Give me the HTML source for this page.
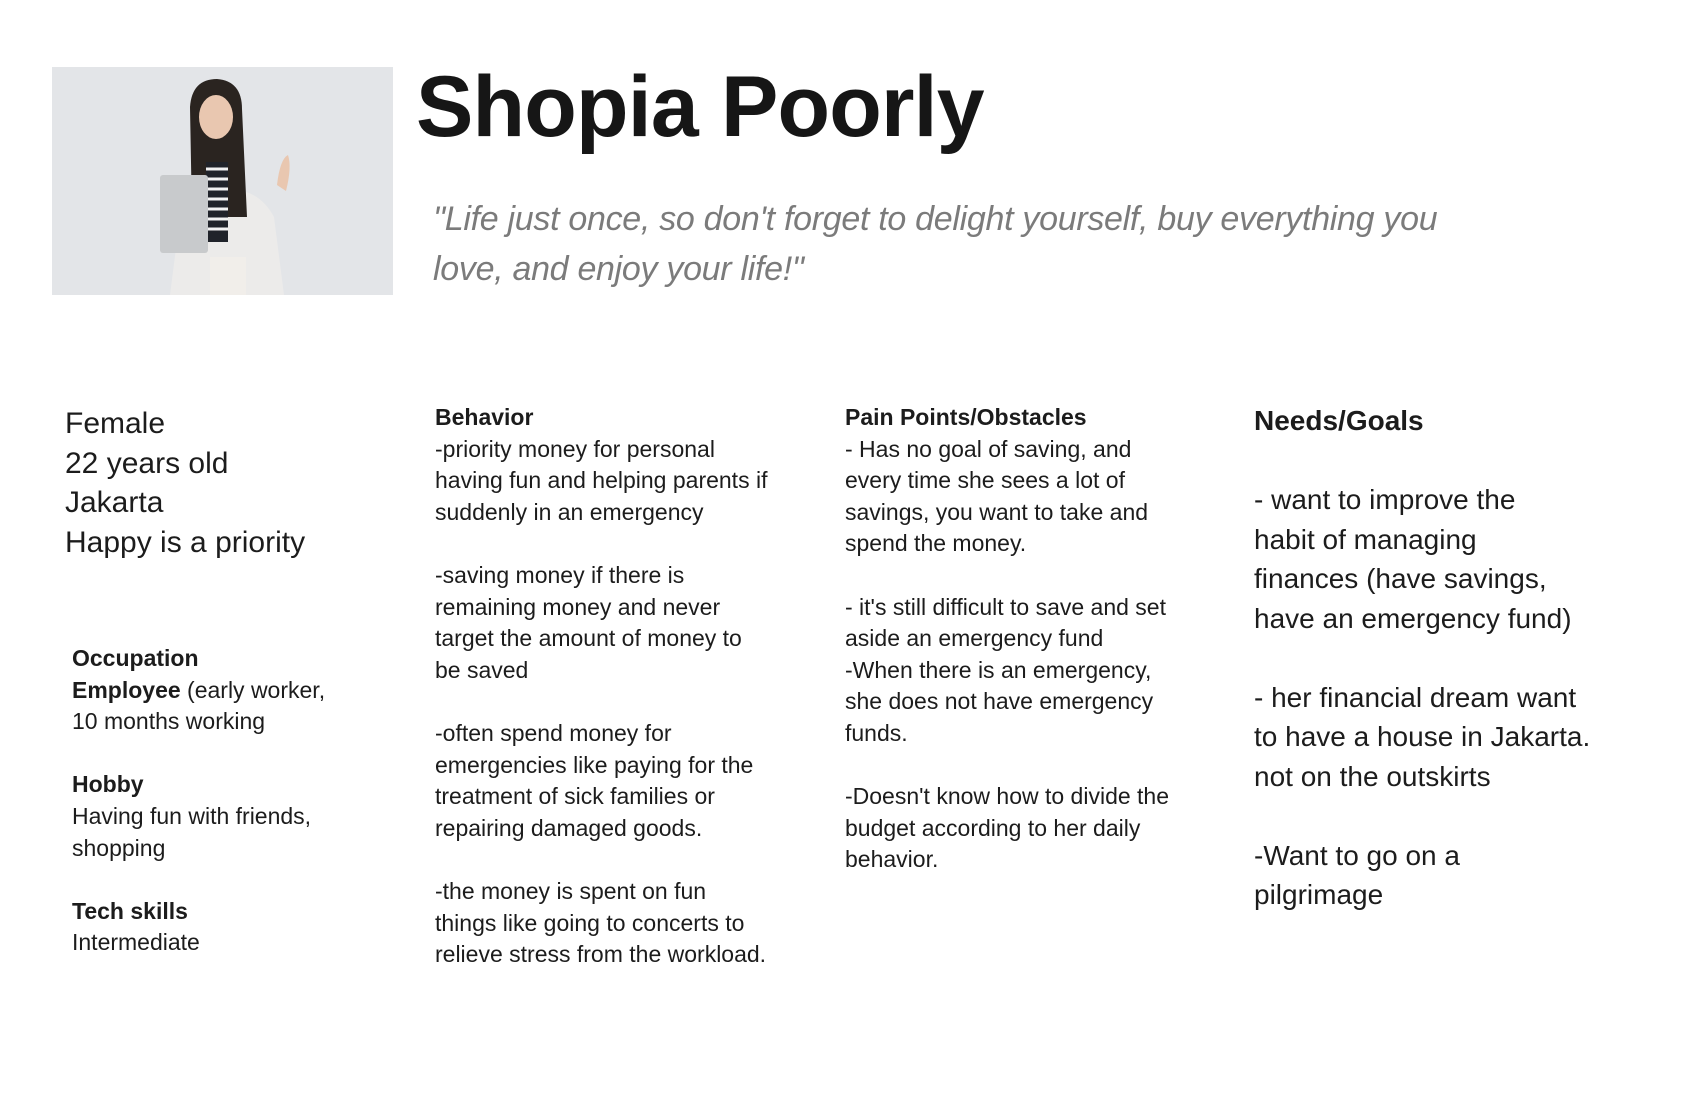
<!DOCTYPE html>
<html><head><meta charset="utf-8"><style>
html,body{margin:0;padding:0;background:#fff;}
body{width:1682px;height:1104px;position:relative;overflow:hidden;font-family:"Liberation Sans",sans-serif;color:#1c1c1c;}
.a{position:absolute;white-space:pre;}
.t{left:416px;top:63px;font-size:86px;font-weight:bold;line-height:88px;letter-spacing:-0.8px;color:#161616;}
.q{left:433px;top:195px;font-size:34px;line-height:49.5px;font-style:italic;color:#7b7b7b;letter-spacing:-0.3px;}
.s{font-size:23px;line-height:31.6px;}
.m{font-size:28px;line-height:39.5px;}
b{font-weight:bold;}
</style></head><body>
<svg style="position:absolute;left:52px;top:67px" width="341" height="228" viewBox="0 0 341 228">
<rect width="341" height="228" fill="#e3e5e8"/>
<path d="M118 228 L128 150 Q140 128 160 126 L190 124 Q210 128 222 150 L232 228 Z" fill="#ecebea"/>
<path d="M138 40 Q140 12 165 12 Q190 14 190 42 L195 150 L140 150 Z" fill="#2a2420"/>
<ellipse cx="164" cy="50" rx="17" ry="22" fill="#e9c7b0"/>
<rect x="154" y="95" width="22" height="80" fill="#20232a"/>
<g stroke="#f2f2f2" stroke-width="3"><line x1="154" y1="102" x2="176" y2="102"/><line x1="154" y1="112" x2="176" y2="112"/><line x1="154" y1="122" x2="176" y2="122"/><line x1="154" y1="132" x2="176" y2="132"/><line x1="154" y1="142" x2="176" y2="142"/><line x1="154" y1="152" x2="176" y2="152"/><line x1="154" y1="162" x2="176" y2="162"/></g>
<rect x="108" y="108" width="48" height="78" rx="3" fill="#c8cacc"/>
<path d="M225 118 Q228 92 236 88 Q240 100 234 124 Z" fill="#e9c7b0"/>
<rect x="158" y="190" width="36" height="38" fill="#f1eeea"/>
</svg>
<div class="a t">Shopia Poorly</div>
<div class="a q">"Life just once, so don't forget to delight yourself, buy everything you
love, and enjoy your life!"</div>
<div class="a m" style="left:65px;top:404px;font-size:30px">Female
22 years old
Jakarta
Happy is a priority</div>
<div class="a s" style="left:72px;top:643px"><b>Occupation</b>
<b>Employee</b> (early worker,
10 months working

<b>Hobby</b>
Having fun with friends,
shopping

<b>Tech skills</b>
Intermediate</div>
<div class="a s" style="left:435px;top:402px"><b>Behavior</b>
-priority money for personal
having fun and helping parents if
suddenly in an emergency

-saving money if there is
remaining money and never
target the amount of money to
be saved

-often spend money for
emergencies like paying for the
treatment of sick families or
repairing damaged goods.

-the money is spent on fun
things like going to concerts to
relieve stress from the workload.</div>
<div class="a s" style="left:845px;top:402px"><b>Pain Points/Obstacles</b>
- Has no goal of saving, and
every time she sees a lot of
savings, you want to take and
spend the money.

- it's still difficult to save and set
aside an emergency fund
-When there is an emergency,
she does not have emergency
funds.

-Doesn't know how to divide the
budget according to her daily
behavior.</div>
<div class="a m" style="left:1254px;top:401px"><b>Needs/Goals</b>

- want to improve the
habit of managing
finances (have savings,
have an emergency fund)

- her financial dream want
to have a house in Jakarta.
not on the outskirts

-Want to go on a
pilgrimage</div>
</body></html>
